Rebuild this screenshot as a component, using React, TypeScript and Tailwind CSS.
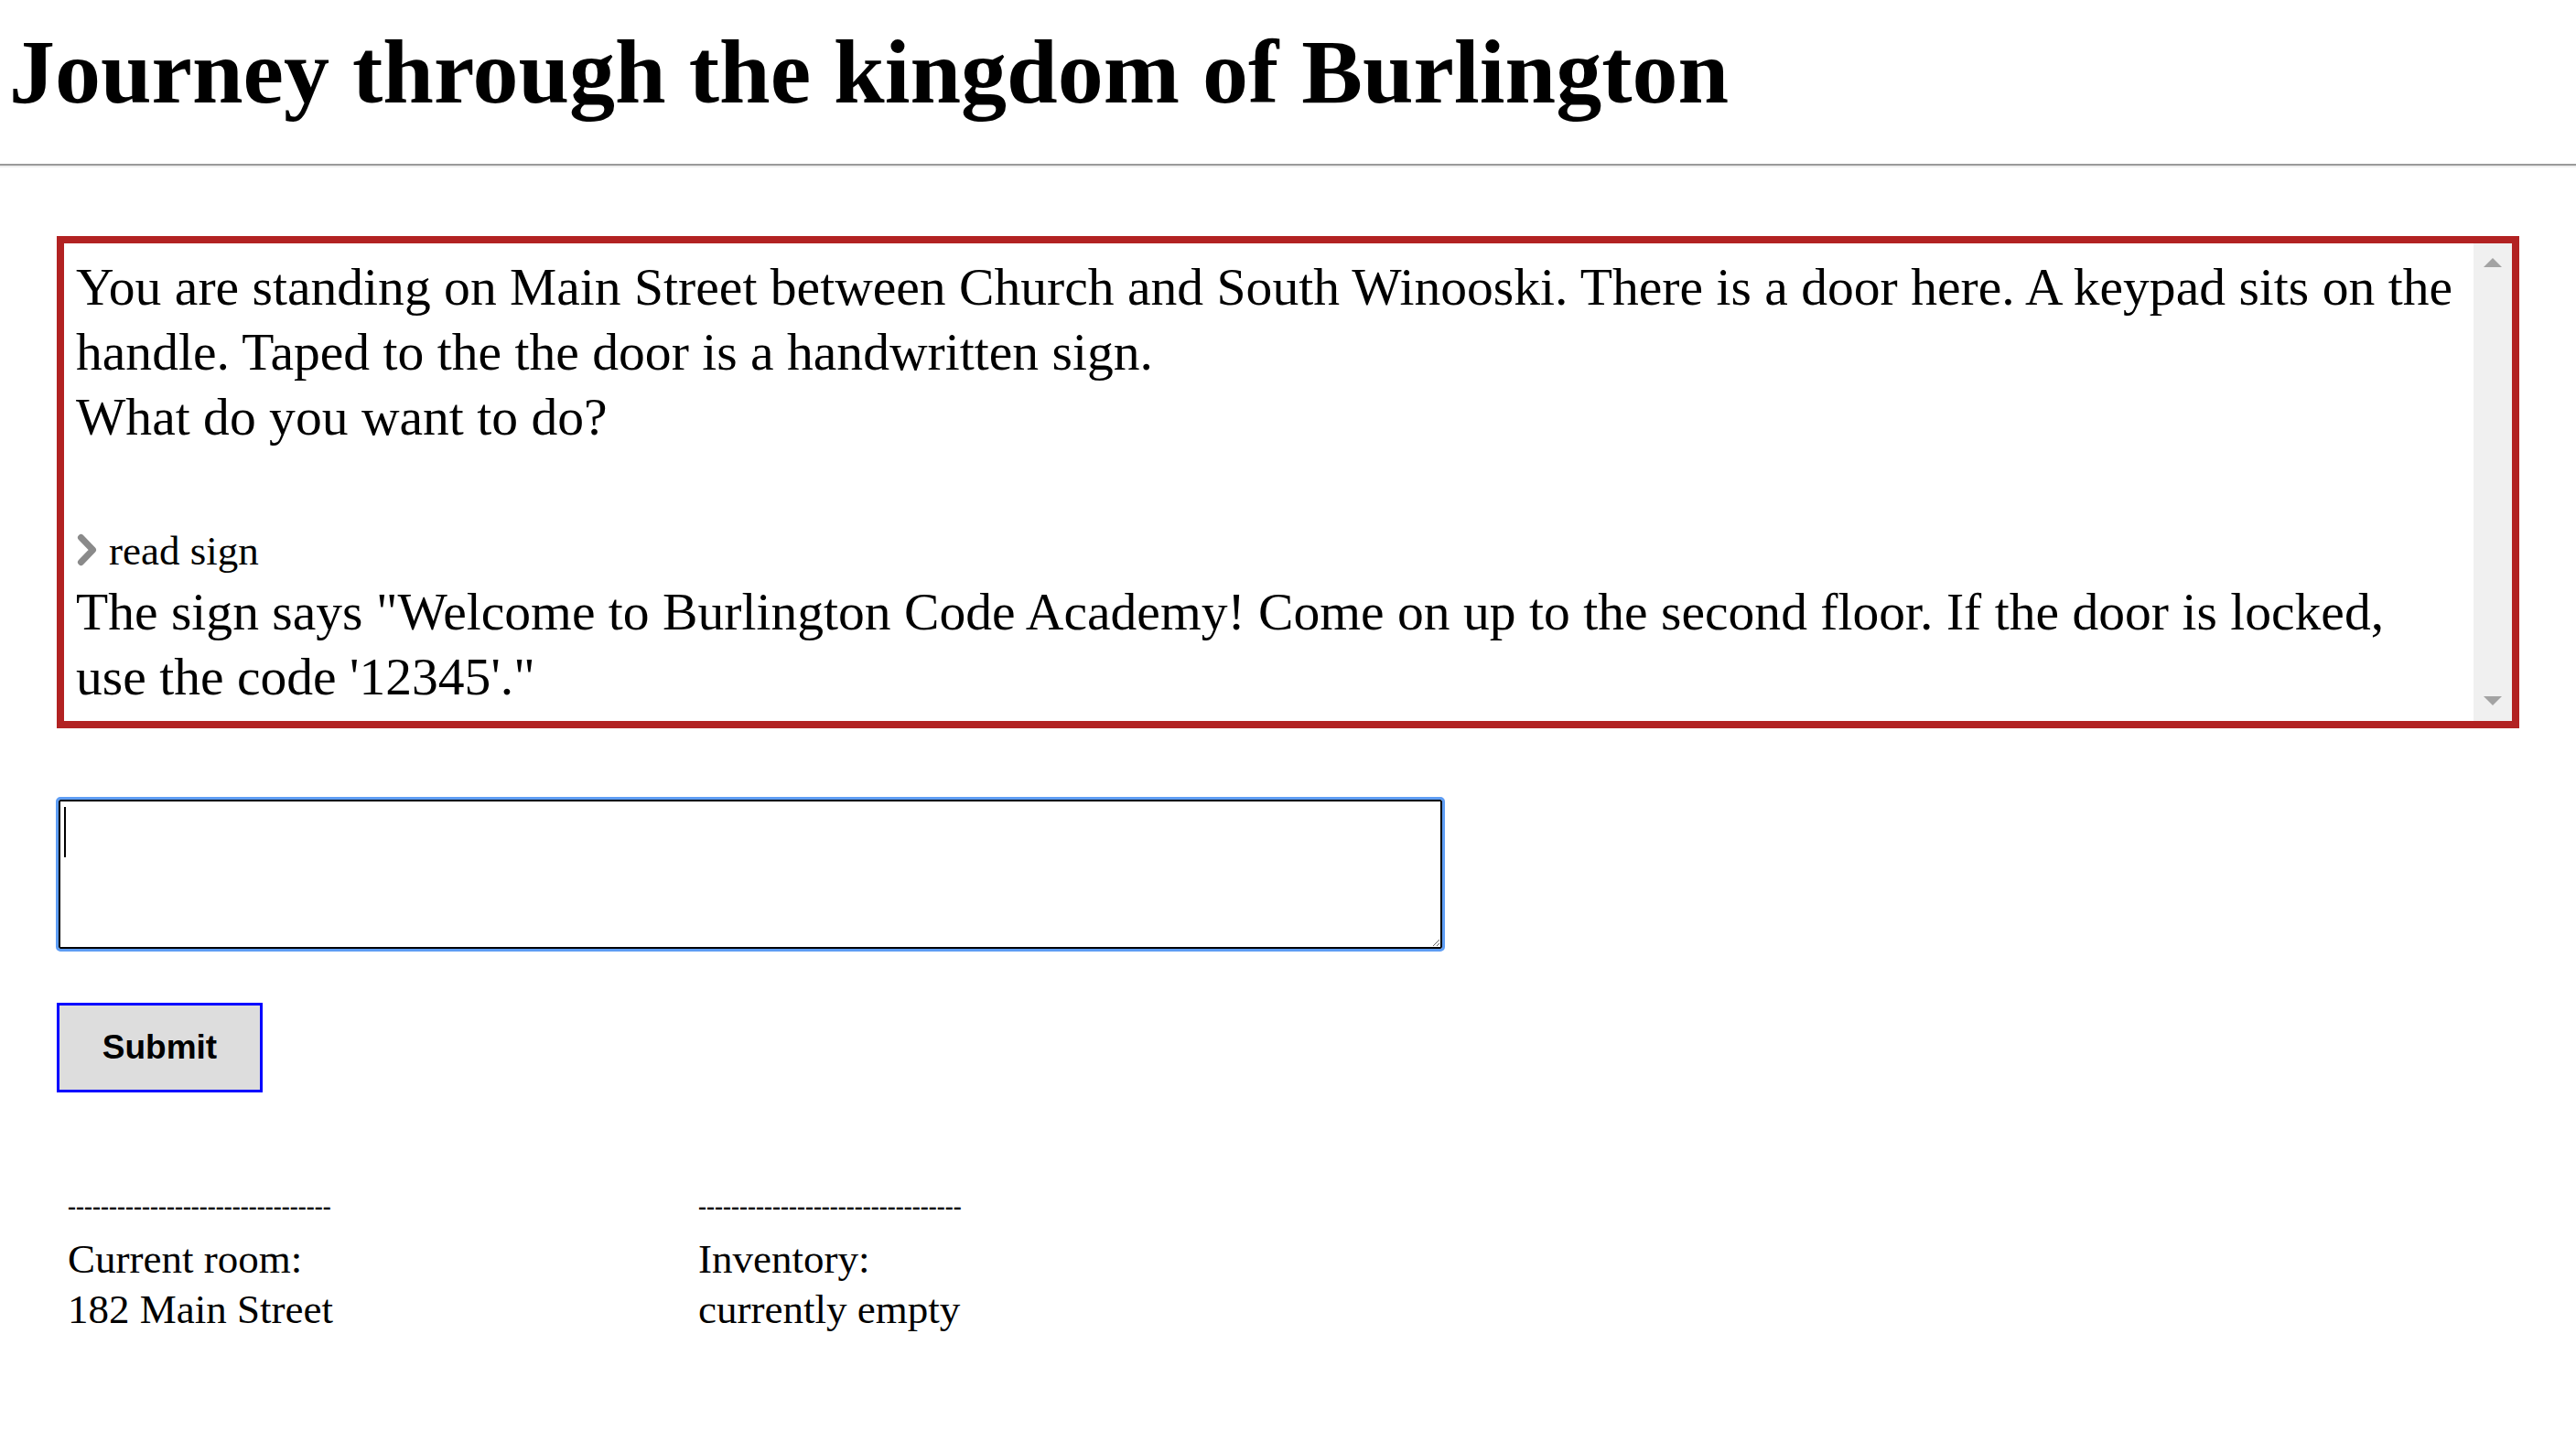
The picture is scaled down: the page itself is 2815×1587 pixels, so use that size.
import React from "react";

function UpArrow() {
  return (
    <svg width="20" height="10" viewBox="0 0 20 10" className="block">
      <polygon points="10,0 20,10 0,10" fill="#a3a3a3" />
    </svg>
  );
}

function DownArrow() {
  return (
    <svg width="20" height="10" viewBox="0 0 20 10" className="block">
      <polygon points="0,0 20,0 10,10" fill="#a3a3a3" />
    </svg>
  );
}

function Chevron() {
  return (
    <svg
      width="22"
      height="36"
      viewBox="0 0 22 36"
      className="inline-block align-[-2px] ml-[1px]"
    >
      <polyline
        points="4.5,4.5 17.5,18 4.5,31.5"
        fill="none"
        stroke="#8a8a8a"
        strokeWidth="7"
        strokeLinecap="round"
        strokeLinejoin="round"
      />
    </svg>
  );
}

export default function App() {
  return (
    <div className="min-h-screen bg-white text-black font-['Liberation_Serif','Times_New_Roman',serif]">
      <h1 className="h-[179px] pt-[21px] pl-[10px] text-[100px] leading-[115px] font-bold whitespace-nowrap">
        Journey through the kingdom of Burlington
      </h1>
      <div className="h-[2px] bg-[#9a9a9a]" />
      <div className="h-[2px] bg-[#eeeeee]" />

      <main className="px-[62px] pt-[75px]">
        <section className="flex h-[538px] border-8 border-[#b22222]">
          <div className="flex-1 pl-[13px] pt-[12px] text-[57.6px] leading-[71px] whitespace-nowrap overflow-hidden">
            <div className="h-[71px]">
              You are standing on Main Street between Church and South Winooski. There is a door here. A keypad sits on the
            </div>
            <div className="h-[71px]">handle. Taped to the the door is a handwritten sign.</div>
            <div className="h-[71px]">What do you want to do?</div>
            <div className="h-[71px]" />
            <div className="h-[71px]">
              <Chevron />
              <span className="ml-[13px] text-[45px] leading-none">read sign</span>
            </div>
            <div className="h-[71px]">
              The sign says "Welcome to Burlington Code Academy! Come on up to the second floor. If the door is locked,
            </div>
            <div className="h-[71px]">use the code '12345'."</div>
          </div>
          <div className="w-[42px] bg-[#f0f0f0] flex flex-col items-center justify-between pt-[16px] pb-[17px]">
            <UpArrow />
            <DownArrow />
          </div>
        </section>

        <div className="relative mt-[78px] ml-[2px] w-[1512px]">
          <textarea
            aria-label="command"
            className="block w-[1512px] h-[163px] border-2 border-black outline-[3px] outline-solid outline-[#5e9df4] rounded-[2px] px-[4px] py-[4px] text-[48px] leading-[55px] caret-black bg-white resize"
          />
          <span className="absolute left-[6px] top-[8px] w-[2px] h-[55px] bg-black pointer-events-none" />
        </div>

        <button className="mt-[59px] w-[225px] h-[98px] border-[3px] border-[#0000ff] bg-[#dddddd] text-[37px] font-bold text-black font-['Liberation_Sans',Arial,sans-serif] flex items-center justify-center">
          Submit
        </button>

        <div className="mt-[109px] pl-[12px] flex">
          <div className="w-[689px]">
            <div className="text-[27px] leading-[30px] font-bold whitespace-nowrap">--------------------------------</div>
            <div className="mt-[16px] text-[45px] leading-[55px]">
              <div>Current room:</div>
              <div>182 Main Street</div>
            </div>
          </div>
          <div>
            <div className="text-[27px] leading-[30px] font-bold whitespace-nowrap">--------------------------------</div>
            <div className="mt-[16px] text-[45px] leading-[55px]">
              <div>Inventory:</div>
              <div>currently empty</div>
            </div>
          </div>
        </div>
      </main>
    </div>
  );
}
